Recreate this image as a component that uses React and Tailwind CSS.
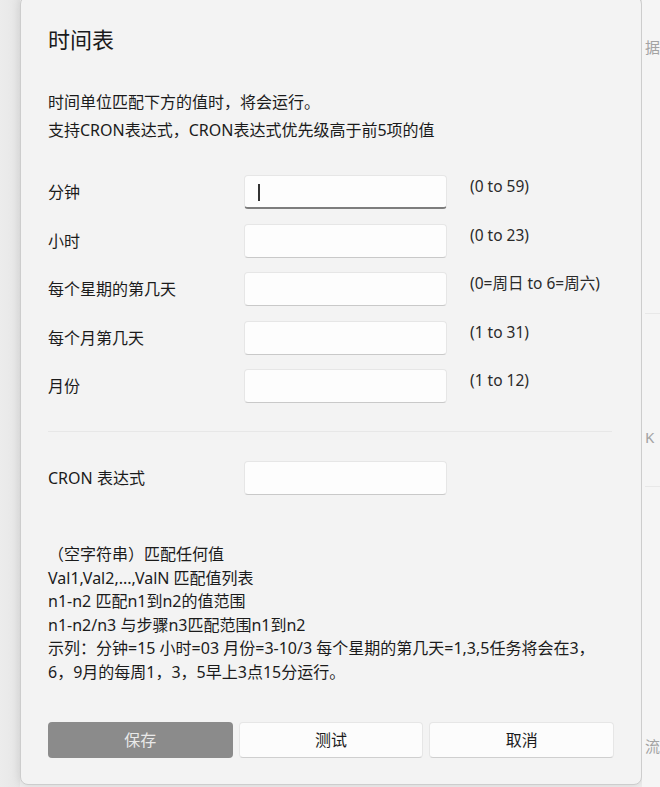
import React from "react";

const font = { fontFamily: '"Noto Sans", "Noto Sans CJK SC", sans-serif' };

const rows = [
  { label: "分钟", hint: "(0 to 59)", focus: true },
  { label: "小时", hint: "(0 to 23)" },
  { label: "每个星期的第几天", hint: "(0=周日 to 6=周六)" },
  { label: "每个月第几天", hint: "(1 to 31)" },
  { label: "月份", hint: "(1 to 12)" },
];

function Input({ focus }) {
  return (
    <div
      className={
        "relative w-[203px] h-[34px] rounded-[4px] bg-[#fdfdfd] border border-[#e6e6e6] " +
        (focus ? "border-b-2 border-b-[#7d7d7d]" : "border-b-[#c9c9c9]")
      }
    >
      {focus && <div className="absolute left-[13px] top-[8px] w-[1.5px] h-[17px] bg-[#333]" />}
    </div>
  );
}

export default function App() {
  return (
    <div className="w-[660px] h-[787px] overflow-hidden bg-[#efefef] flex" style={font}>
      <div className="w-[20px] shrink-0 bg-gradient-to-r from-[#ececec] to-[#e6e6e6]" />
      <div className="w-[622px] h-[789px] -mt-[4px] shrink-0 rounded-[8px] border border-[#cdcdcd] bg-[#f3f3f3] shadow-[0_0_10px_rgba(0,0,0,0.12)] pl-[27px] pt-[28px] flex flex-col text-[#1b1b1b]">
        <div className="text-[22px] leading-[28px]">时间表</div>
        <div className="mt-[35px] text-[16px] leading-[28px]">
          <div>时间单位匹配下方的值时，将会运行。</div>
          <div>支持CRON表达式，CRON表达式优先级高于前5项的值</div>
        </div>
        <div className="mt-[31px] flex flex-col gap-[14.5px]">
          {rows.map((r) => (
            <div key={r.label} className="flex h-[34px]">
              <div className="w-[196px] text-[16px] leading-[34px]">{r.label}</div>
              <Input focus={r.focus} />
              <div className="ml-[23px] text-[15.5px] leading-[22px] text-[#2a2a2a] whitespace-nowrap">{r.hint}</div>
            </div>
          ))}
        </div>
        <div className="mt-[28px] mr-[29px] h-px bg-[#e7e7e7]" />
        <div className="mt-[29px] flex h-[35px]">
          <div className="w-[196px] text-[16px] leading-[35px]">CRON 表达式</div>
          <Input />
        </div>
        <div className="mt-[47px] text-[16px] leading-[23.5px] whitespace-nowrap">
          <div>（空字符串）匹配任何值</div>
          <div>Val1,Val2,...,ValN 匹配值列表</div>
          <div>n1-n2 匹配n1到n2的值范围</div>
          <div>n1-n2/n3 与步骤n3匹配范围n1到n2</div>
          <div>示列：分钟=15 小时=03 月份=3-10/3 每个星期的第几天=1,3,5任务将会在3，</div>
          <div>6，9月的每周1，3，5早上3点15分运行。</div>
        </div>
        <div className="mt-[38px] w-[566px] grid grid-cols-3 gap-[6px] text-[16px]">
          <div className="h-[36px] rounded-[4px] bg-[#8b8b8b] text-[#e9e9e9] flex items-center justify-center">保存</div>
          <div className="h-[36px] rounded-[4px] bg-[#fcfcfc] border border-[#e6e6e6] border-b-[#cfcfcf] flex items-center justify-center">测试</div>
          <div className="h-[36px] rounded-[4px] bg-[#fcfcfc] border border-[#e6e6e6] border-b-[#cfcfcf] flex items-center justify-center">取消</div>
        </div>
      </div>
      <div className="flex-1 overflow-hidden bg-[#f5f5f5] flex flex-col text-[15px] text-[#a3a3a3] whitespace-nowrap pl-[3px]">
        <div className="mt-[36px] leading-[22px]">据自</div>
        <div className="mt-[255px] h-px bg-[#e8e8e8]" />
        <div className="mt-[112px] leading-[22px]">K</div>
        <div className="mt-[38px] h-px bg-[#e8e8e8]" />
        <div className="mt-[248px] leading-[22px]">流</div>
      </div>
    </div>
  );
}
